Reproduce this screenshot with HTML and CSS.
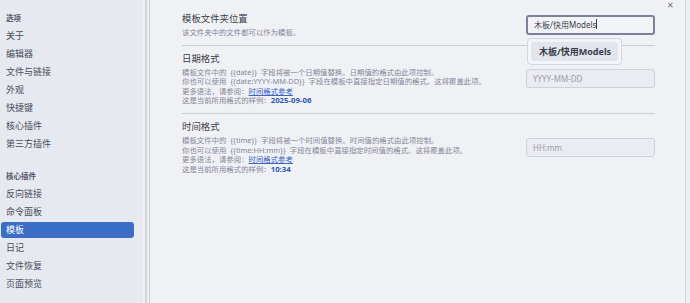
FILE: index.html
```html
<!DOCTYPE html>
<html lang="zh-CN">
<head>
  <meta charset="UTF-8" />
  <title>模板</title>
  <link rel="stylesheet" href="styles.css">
</head>
<body>

<nav class="sidebar">
  <div class="nav-group">选项</div>
  <div class="nav-item">关于</div>
  <div class="nav-item">编辑器</div>
  <div class="nav-item">文件与链接</div>
  <div class="nav-item">外观</div>
  <div class="nav-item">快捷键</div>
  <div class="nav-item">核心插件</div>
  <div class="nav-item">第三方插件</div>

  <div class="nav-group nav-group-gap">核心插件</div>
  <div class="nav-item">反向链接</div>
  <div class="nav-item">命令面板</div>
  <div class="nav-item active">模板</div>
  <div class="nav-item">日记</div>
  <div class="nav-item">文件恢复</div>
  <div class="nav-item">页面预览</div>
</nav>

<div class="gutter"></div>

<main class="content">
  <span class="close">✕</span>

  <div class="setting">
    <div class="setting-info">
      <div class="setting-name">模板文件夹位置</div>
      <div class="setting-desc">该文件夹中的文件都可以作为模板。</div>
    </div>
    <div class="control">
      <div class="input focused">木板/快用Models<span class="caret"></span></div>
      <!-- suggestion popup -->
      <div class="suggest">
        <div class="suggest-item">木板/快用Models</div>
      </div>
    </div>
  </div>

  <div class="setting">
    <div class="setting-info">
      <div class="setting-name">日期格式</div>
      <div class="setting-desc">
        模板文件中的 {{date}} 字段将被一个日期值替换。日期值的格式由此项控制。<br>
        你也可以使用 {{date:YYYY-MM-DD}} 字段在模板中直接指定日期值的格式。这将覆盖此项。<br>
        更多语法，请参阅：<a href="#">时间格式参考</a><br>
        这是当前所用格式的样例：<b class="sample">2025-09-06</b>
      </div>
    </div>
    <div class="control">
      <div class="input placeholder">YYYY-MM-DD</div>
    </div>
  </div>

  <div class="setting">
    <div class="setting-info">
      <div class="setting-name">时间格式</div>
      <div class="setting-desc">
        模板文件中的 {{time}} 字段将被一个时间值替换。时间值的格式由此项控制。<br>
        你也可以使用 {{time:HH:mm}} 字段在模板中直接指定时间值的格式。这将覆盖此项。<br>
        更多语法，请参阅：<a href="#">时间格式参考</a><br>
        这是当前所用格式的样例：<b class="sample">10:34</b>
      </div>
    </div>
    <div class="control">
      <div class="input placeholder">HH:mm</div>
    </div>
  </div>
</main>

<div class="edge"></div>

</body>
</html>
```

FILE: styles.css
```css
html, body {
  height: 100%;
}
body {
  margin: 0;
  display: flex;
  overflow: hidden;
  font-family: 'Noto Sans', 'Noto Sans CJK SC', sans-serif;
  background-color: #f0f1f5;
  color: #3b3d4a;
}
.sidebar {
  width: 143px;
  flex-shrink: 0;
  display: flex;
  flex-direction: column;
  box-sizing: border-box;
  padding: 9px 9px 0 1px;
  background-color: #e6e9f0;
}
.nav-group {
  height: 18px;
  line-height: 18px;
  padding-left: 5px;
  font-size: 7.5px;
  font-weight: 700;
  color: #55586a;
}
.nav-group-gap {
  margin-top: 14px;
}
.nav-item {
  height: 16px;
  line-height: 16px;
  margin: 1px 0;
  padding-left: 5px;
  font-size: 9px;
  color: #4a4c5a;
  border-radius: 3px;
}
.nav-item.active {
  background-color: #3a6dc6;
  color: white;
}
.gutter {
  width: 2px;
  flex-shrink: 0;
  background-color: #d0d4de;
  border-left: 2px solid #eef0f4;
  border-right: 2px solid #eef0f4;
}
.content {
  flex: 1;
  position: relative;
  padding: 6px 30px 0 32px;
  border-left: 1px solid #c8ccd8;
  border-right: 1px solid #d3d6df;
  background-color: #f0f1f5;
}
.edge {
  width: 4px;
  flex-shrink: 0;
  background-color: #eef0f4;
}
.close {
  position: absolute;
  top: -1px;
  right: 11px;
  font-size: 8px;
  line-height: 12px;
  color: #6d7080;
}
.setting {
  display: flex;
  align-items: center;
  justify-content: space-between;
  padding: 6px 0 7px;
  border-bottom: 1px solid #c9cbd6;
}
.setting:last-child {
  border-bottom: none;
}
.setting-name {
  font-size: 9.4px;
  line-height: 14px;
  color: #3b3d4a;
}
.setting-desc {
  margin-top: 2px;
  font-size: 7.4px;
  line-height: 9.6px;
  word-spacing: 2px;
  color: #868897;
}
.setting-desc a {
  color: #3b63c0;
  text-decoration: underline;
}
.sample {
  color: #2c57b3;
  font-size: 7.8px;
  font-weight: 700;
}
.control {
  position: relative;
  flex-shrink: 0;
}
.input {
  width: 129px;
  height: 19px;
  box-sizing: border-box;
  padding: 0 6px;
  line-height: 17px;
  font-size: 8px;
  border: 1px solid #cfd1da;
  border-radius: 3px;
  background-color: #ebecf1;
  color: #3b3d4a;
}
.input.focused {
  height: 20px;
  line-height: 16px;
  border: 2px solid #7c8099;
  background-color: #f2f3f7;
}
.input.placeholder {
  color: #9a9caa;
}
.caret {
  display: inline-block;
  width: 1px;
  height: 10px;
  vertical-align: -1px;
  background-color: #3b3d4a;
}
.suggest {
  position: absolute;
  top: 23px;
  left: 1px;
  width: 95px;
  height: 27px;
  box-sizing: border-box;
  padding: 3px;
  border: 1px solid #d4d6de;
  border-radius: 4px;
  background-color: #f4f5f8;
}
.suggest-item {
  height: 19px;
  line-height: 19px;
  padding-left: 8px;
  border-radius: 3px;
  background-color: #e3e5ec;
  font-size: 9px;
  font-weight: 700;
  color: #3b3d4a;
}
```
